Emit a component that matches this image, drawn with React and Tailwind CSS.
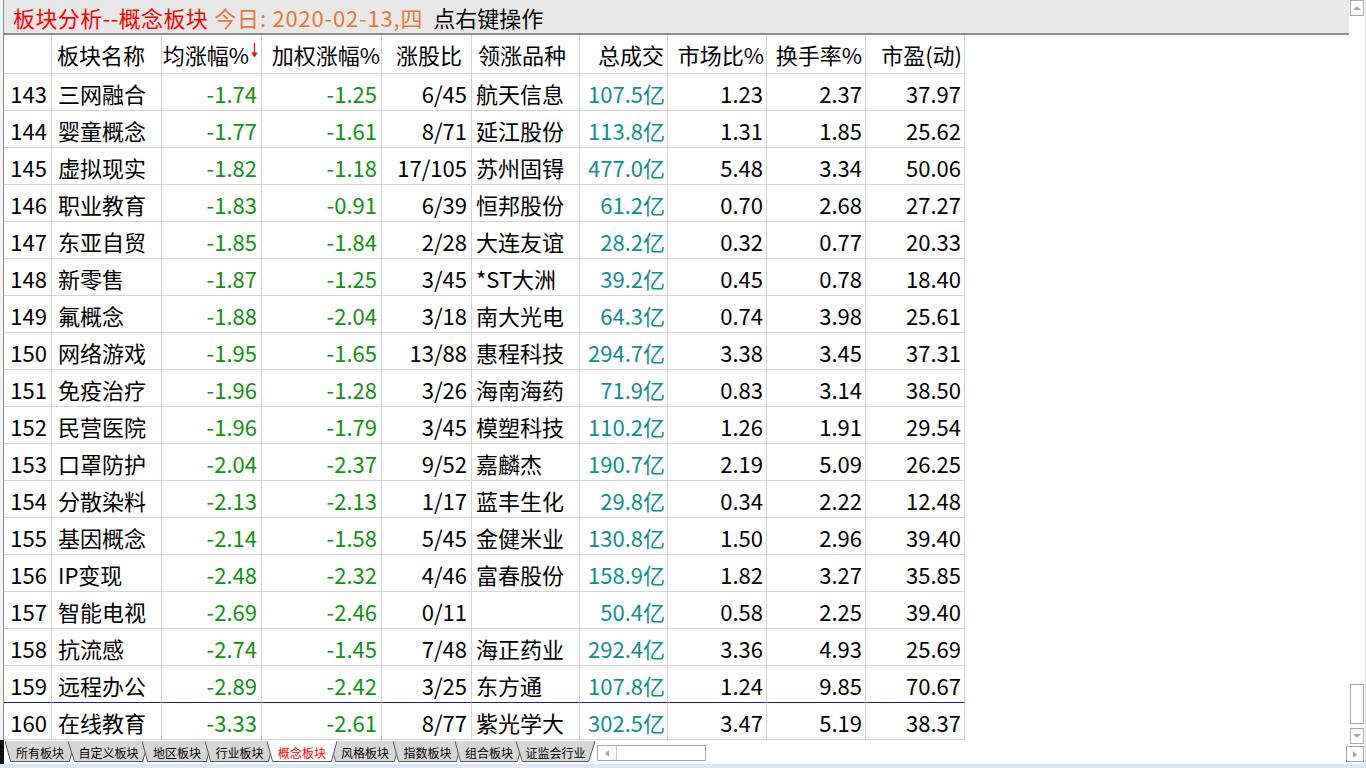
import React from 'react';

const rows = [
  ['143', '三网融合', '-1.74', '-1.25', '6/45', '航天信息', '107.5亿', '1.23', '2.37', '37.97'],
  ['144', '婴童概念', '-1.77', '-1.61', '8/71', '延江股份', '113.8亿', '1.31', '1.85', '25.62'],
  ['145', '虚拟现实', '-1.82', '-1.18', '17/105', '苏州固锝', '477.0亿', '5.48', '3.34', '50.06'],
  ['146', '职业教育', '-1.83', '-0.91', '6/39', '恒邦股份', '61.2亿', '0.70', '2.68', '27.27'],
  ['147', '东亚自贸', '-1.85', '-1.84', '2/28', '大连友谊', '28.2亿', '0.32', '0.77', '20.33'],
  ['148', '新零售', '-1.87', '-1.25', '3/45', '*ST大洲', '39.2亿', '0.45', '0.78', '18.40'],
  ['149', '氟概念', '-1.88', '-2.04', '3/18', '南大光电', '64.3亿', '0.74', '3.98', '25.61'],
  ['150', '网络游戏', '-1.95', '-1.65', '13/88', '惠程科技', '294.7亿', '3.38', '3.45', '37.31'],
  ['151', '免疫治疗', '-1.96', '-1.28', '3/26', '海南海药', '71.9亿', '0.83', '3.14', '38.50'],
  ['152', '民营医院', '-1.96', '-1.79', '3/45', '模塑科技', '110.2亿', '1.26', '1.91', '29.54'],
  ['153', '口罩防护', '-2.04', '-2.37', '9/52', '嘉麟杰', '190.7亿', '2.19', '5.09', '26.25'],
  ['154', '分散染料', '-2.13', '-2.13', '1/17', '蓝丰生化', '29.8亿', '0.34', '2.22', '12.48'],
  ['155', '基因概念', '-2.14', '-1.58', '5/45', '金健米业', '130.8亿', '1.50', '2.96', '39.40'],
  ['156', 'IP变现', '-2.48', '-2.32', '4/46', '富春股份', '158.9亿', '1.82', '3.27', '35.85'],
  ['157', '智能电视', '-2.69', '-2.46', '0/11', '', '50.4亿', '0.58', '2.25', '39.40'],
  ['158', '抗流感', '-2.74', '-1.45', '7/48', '海正药业', '292.4亿', '3.36', '4.93', '25.69'],
  ['159', '远程办公', '-2.89', '-2.42', '3/25', '东方通', '107.8亿', '1.24', '9.85', '70.67'],
  ['160', '在线教育', '-3.33', '-2.61', '8/77', '紫光学大', '302.5亿', '3.47', '5.19', '38.37'],
];

// per column: alignment/padding and text colour for data cells
const cellCls = [
  'justify-end pr-[4px] text-black',
  'justify-start pl-[6px] text-black',
  'justify-end pr-[4px] text-[#119111]',
  'justify-end pr-[4px] text-[#119111]',
  'justify-end pr-[4px] text-black',
  'justify-start pl-[4px] text-black',
  'justify-end pr-[2px] text-[#0f8f8f]',
  'justify-end pr-[3px] text-black',
  'justify-end pr-[3px] text-black',
  'justify-end pr-[3px] text-black',
];

const tabs = [
  { label: '所有板块', w: 'w-[70px]' },
  { label: '自定义板块', w: 'w-[81px]' },
  { label: '地区板块', w: 'w-[70px]' },
  { label: '行业板块', w: 'w-[69px]' },
  { label: '概念板块', w: 'w-[70px]', active: true },
  { label: '风格板块', w: 'w-[70px]' },
  { label: '指数板块', w: 'w-[69px]' },
  { label: '组合板块', w: 'w-[68px]' },
  { label: '证监会行业', w: 'w-[79px]' },
];

function Tab({ label, w, active, first }) {
  return (
    <div className={`relative h-[21px] ${w} ${first ? '' : '-ml-[7px]'} ${active ? 'z-10' : ''} flex items-center justify-center`}>
      <svg className="absolute inset-0 w-full h-full" preserveAspectRatio="none" viewBox="0 0 100 21">
        <polygon points="0,0 100,0 92,20.5 8,20.5" fill={active ? '#ffffff' : '#d6d6d6'} stroke="none" />
        <polyline points="0,0 8,20.5 92,20.5 100,0" fill="none" stroke="#5a5a5a" strokeWidth="1" vectorEffect="non-scaling-stroke" />
      </svg>
      <span className={`relative text-[12px] leading-none pt-[2px] ${active ? 'text-[#ff0000]' : 'text-black'}`}>{label}</span>
    </div>
  );
}

function ArrowDown() {
  return (
    <svg width="7" height="15" viewBox="0 0 7 15" className="ml-[2px] -mt-[8px]">
      <line x1="3.5" y1="0" x2="3.5" y2="13" stroke="#ff0000" strokeWidth="1.2" />
      <polyline points="0.8,9.5 3.5,14 6.2,9.5" fill="#ff0000" stroke="#ff0000" strokeWidth="0.8" />
    </svg>
  );
}

export default function App() {
  const headers = [
    { t: '', cls: '' },
    { t: '板块名称', cls: 'justify-start pl-[5px]' },
    { t: '均涨幅%', cls: 'justify-end pr-[3px]', arrow: true },
    { t: '加权涨幅%', cls: 'justify-end pr-[1px]' },
    { t: '涨股比', cls: 'justify-end pr-[9px]' },
    { t: '领涨品种', cls: 'justify-start pl-[6px]' },
    { t: '总成交', cls: 'justify-end pr-[3px]' },
    { t: '市场比%', cls: 'justify-end pr-[2px]' },
    { t: '换手率%', cls: 'justify-end pr-[3px]' },
    { t: '市盈(动)', cls: 'justify-end pr-[2px]' },
  ];

  return (
    <div className="w-[1366px] h-[768px] bg-white overflow-hidden flex flex-col font-['Noto_Sans_CJK_SC','Noto_Sans',sans-serif]">
      <div className="flex flex-1 min-h-0">
        {/* main column */}
        <div className="w-[1349px] flex flex-col">
          <div className="flex h-[740px]">
            <div className="w-[4px] bg-[#f2f2f2] border-r border-[#8a8a8a]" />
            <div className="flex-1 flex flex-col">
              {/* title bar */}
              <div className="h-[35px] bg-[#e8e8e8] border-b-2 border-[#8c8c8c] flex items-center pl-[9px] text-[22px] leading-none whitespace-nowrap">
                <span className="text-[#ff0000] tracking-[0.4px]">板块分析--概念板块</span>
                <span className="text-[#e37a3c] ml-[6px] tracking-[0.8px]">今日: 2020-02-13,四</span>
                <span className="text-black ml-[10px]">点右键操作</span>
              </div>
              {/* table */}
              <div className="grid grid-cols-[48px_110px_100px_120px_90px_108px_88px_99px_99px_99px] w-[961px] text-[22px] leading-none">
                {headers.map((h, i) => (
                  <div key={i} className={`h-[39px] flex items-center border-r border-b border-[#d3d3d3] text-black whitespace-nowrap ${h.cls}`}>
                    {h.t}
                    {h.arrow && <ArrowDown />}
                  </div>
                ))}
                {rows.map((r, ri) =>
                  r.map((c, ci) => (
                    <div
                      key={`${ri}-${ci}`}
                      className={`h-[37px] flex items-center pt-[2px] border-r border-b whitespace-nowrap ${ri === 16 ? 'border-b-[#1c1ca0]' : 'border-b-[#d3d3d3]'} border-r-[#d3d3d3] ${cellCls[ci]}`}
                    >
                      {c}
                    </div>
                  ))
                )}
              </div>
            </div>
          </div>
          {/* sheet tabs */}
          <div className="flex h-[24px] items-start">
            <div className="w-[4px] h-[24px] bg-[#111111]" />
            <div className="flex pt-[1px] pl-[1px]">
              {tabs.map((t, i) => (
                <Tab key={t.label} {...t} first={i === 0} />
              ))}
            </div>
            <div className="ml-[2px] mt-[5px] w-[109px] h-[16px] border border-[#a8a8a8] flex">
              <div className="w-[19px] h-full border-r border-[#c8c8c8] flex items-center justify-center">
                <svg width="4" height="7" viewBox="0 0 4 7"><polygon points="4,0 0,3.5 4,7" fill="#a8a8a8" /></svg>
              </div>
            </div>
          </div>
        </div>
        {/* vertical scrollbar */}
        <div className="w-[17px] flex flex-col border-r border-[#dcdcdc]">
          <div className="ml-[1px] w-[14px] h-[16px] border border-[#a8a8a8] flex items-center justify-center">
            <svg width="8" height="4" viewBox="0 0 8 4"><polygon points="0,4 4,0 8,4" fill="#a8a8a8" /></svg>
          </div>
          <div className="flex-1" />
          <div className="ml-[1px] w-[14px] h-[40px] border border-[#a8a8a8]" />
          <div className="ml-[1px] mt-[4px] w-[14px] h-[16px] border border-[#a8a8a8] flex items-center justify-center">
            <svg width="8" height="4" viewBox="0 0 8 4"><polygon points="0,0 8,0 4,4" fill="#a8a8a8" /></svg>
          </div>
          <div className="-ml-[3px] mt-[2px] mb-[2px] w-[18px] h-[16px] border border-[#a8a8a8] flex items-center justify-center">
            <svg width="4" height="7" viewBox="0 0 4 7"><polygon points="0,0 4,3.5 0,7" fill="#a8a8a8" /></svg>
          </div>
        </div>
      </div>
      <div className="h-[4px] bg-[#dce7f4]" />
    </div>
  );
}
